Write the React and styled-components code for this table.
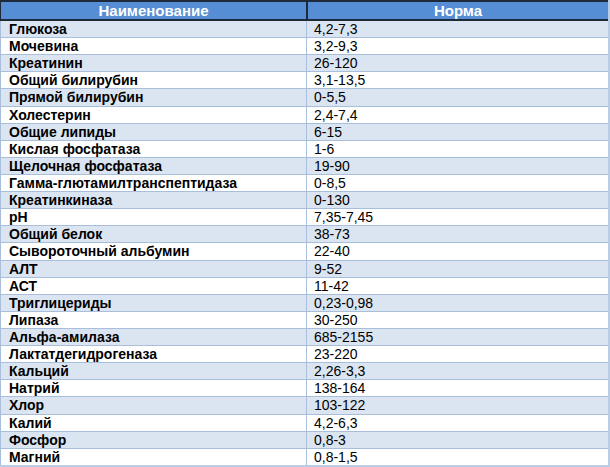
import React from "react";
import styled, { createGlobalStyle } from "styled-components";

const rows = [
  ["Глюкоза", "4,2-7,3"],
  ["Мочевина", "3,2-9,3"],
  ["Креатинин", "26-120"],
  ["Общий билирубин", "3,1-13,5"],
  ["Прямой билирубин", "0-5,5"],
  ["Холестерин", "2,4-7,4"],
  ["Общие липиды", "6-15"],
  ["Кислая фосфатаза", "1-6"],
  ["Щелочная фосфатаза", "19-90"],
  ["Гамма-глютамилтранспептидаза", "0-8,5"],
  ["Креатинкиназа", "0-130"],
  ["pH", "7,35-7,45"],
  ["Общий белок", "38-73"],
  ["Сывороточный альбумин", "22-40"],
  ["АЛТ", "9-52"],
  ["АСТ", "11-42"],
  ["Триглицериды", "0,23-0,98"],
  ["Липаза", "30-250"],
  ["Альфа-амилаза", "685-2155"],
  ["Лактатдегидрогеназа", "23-220"],
  ["Кальций", "2,26-3,3"],
  ["Натрий", "138-164"],
  ["Хлор", "103-122"],
  ["Калий", "4,2-6,3"],
  ["Фосфор", "0,8-3"],
  ["Магний", "0,8-1,5"],
];

const GlobalStyle = createGlobalStyle`
  html, body {
    margin: 0;
    padding: 0;
    background: #fff;
  }
`;

const App = () => (
  <>
    <GlobalStyle />
    <Table>
      <HeaderRow>
        <HeadCell>Наименование</HeadCell>
        <HeadCell $last>Норма</HeadCell>
      </HeaderRow>
      <Body>
        {rows.map(([name, norm], i) => (
          <Row key={name} $shaded={i % 2 === 0}>
            <NameCell>{name}</NameCell>
            <ValueCell>{norm}</ValueCell>
          </Row>
        ))}
      </Body>
    </Table>
  </>
);

export default App;

const Table = styled.div`
  width: 610px;
  height: 467px;
  box-sizing: border-box;
  display: flex;
  flex-direction: column;
  font-family: "Liberation Sans", Arial, sans-serif;
  font-size: 14px;
  color: #000;
  border-right: 2px solid #b9cde6;
  border-bottom: 2px solid #b9cde6;
`;

const HeaderRow = styled.div`
  display: grid;
  grid-template-columns: 307px 1fr;
  height: 21px;
  box-sizing: border-box;
  background: #558ed5;
  border-top: 2px solid #1d2a3b;
  border-bottom: 2px solid #1d2a3b;
  border-left: 1px solid #1d2a3b;
`;

const HeadCell = styled.div`
  display: flex;
  align-items: center;
  justify-content: center;
  color: #fff;
  font-size: 15px;
  font-weight: bold;
  border-right: ${({ $last }) => ($last ? "none" : "2px solid #1d2a3b")};
  line-height: 1;
`;

const Body = styled.div`
  flex: 1;
  display: flex;
  flex-direction: column;
  border-left: 1px solid #a9bedb;
`;

const Row = styled.div`
  flex: 1;
  display: grid;
  grid-template-columns: 306px 1fr;
  box-sizing: border-box;
  background: ${({ $shaded }) => ($shaded ? "#dbe5f1" : "#fff")};
  border-bottom: 1px solid #a9bedb;
  line-height: 1;

  &:last-child {
    border-bottom: none;
  }
`;

const NameCell = styled.div`
  display: flex;
  align-items: center;
  padding-left: 8px;
  font-weight: bold;
  border-right: 1px solid #a9bedb;
  white-space: nowrap;
`;

const ValueCell = styled.div`
  display: flex;
  align-items: center;
  padding-left: 7px;
  white-space: nowrap;
`;
